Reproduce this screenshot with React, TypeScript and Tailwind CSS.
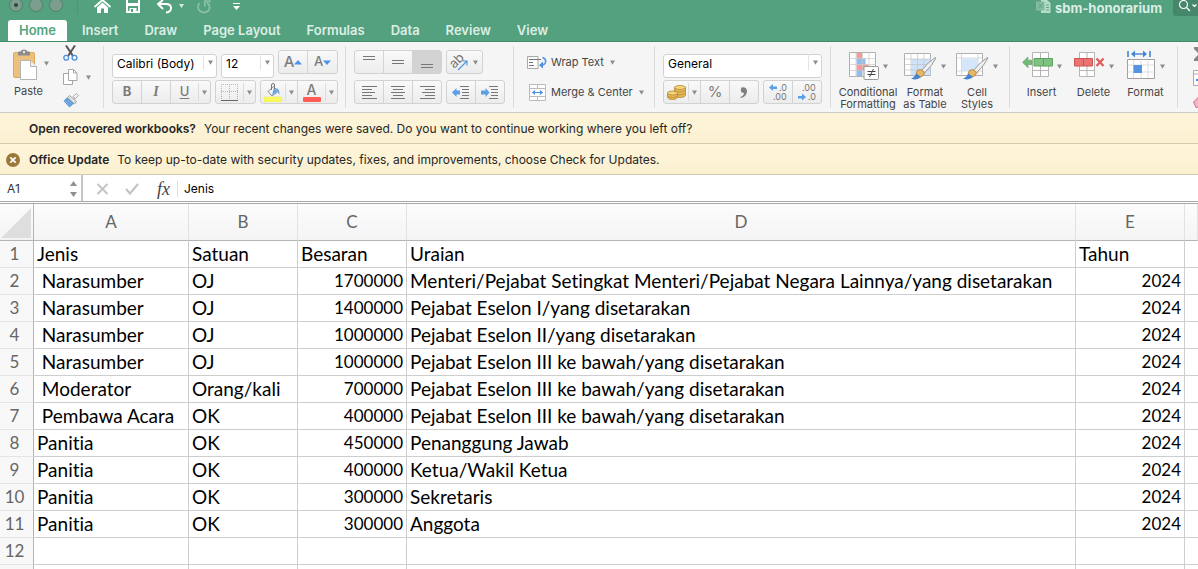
import type { ReactNode } from "react";

const UI = "font-['Inter','Liberation_Sans',sans-serif]";
const GRID = "font-['Lato','Liberation_Sans',sans-serif] [font-variant-ligatures:none]";

const tabs = ["Insert", "Draw", "Page Layout", "Formulas", "Data", "Review", "View"];

type Row = [string, string, string, string, string];

const rows: Row[] = [
  ["Jenis", "Satuan", "Besaran", "Uraian", "Tahun"],
  [" Narasumber", "OJ", "1700000", "Menteri/Pejabat Setingkat Menteri/Pejabat Negara Lainnya/yang disetarakan", "2024"],
  [" Narasumber", "OJ", "1400000", "Pejabat Eselon I/yang disetarakan", "2024"],
  [" Narasumber", "OJ", "1000000", "Pejabat Eselon II/yang disetarakan", "2024"],
  [" Narasumber", "OJ", "1000000", "Pejabat Eselon III ke bawah/yang disetarakan", "2024"],
  [" Moderator", "Orang/kali", "700000", "Pejabat Eselon III ke bawah/yang disetarakan", "2024"],
  [" Pembawa Acara", "OK", "400000", "Pejabat Eselon III ke bawah/yang disetarakan", "2024"],
  ["Panitia", "OK", "450000", "Penanggung Jawab", "2024"],
  ["Panitia", "OK", "400000", "Ketua/Wakil Ketua", "2024"],
  ["Panitia", "OK", "300000", "Sekretaris", "2024"],
  ["Panitia", "OK", "300000", "Anggota", "2024"],
  ["", "", "", "", ""],
];

function Caret() {
  return (
    <svg width="5" height="5" viewBox="0 0 5 5" className="shrink-0 fill-[#8c8c8c]" aria-hidden="true">
      <path d="M0 0.5h5L2.5 4.8z" />
    </svg>
  );
}

function Segments({ children }: { children: ReactNode }) {
  return (
    <div className="flex h-6 shrink-0 divide-x divide-[#d4d4d4] overflow-hidden rounded-[3px] border border-[#d2d2d2] bg-linear-to-b from-[#f9f9f9] to-[#ececec]">
      {children}
    </div>
  );
}

function Segment({ label, width, pressed, children }: { label: string; width: string; pressed?: boolean; children: ReactNode }) {
  return (
    <button
      type="button"
      aria-label={label}
      aria-pressed={pressed}
      className={`flex items-center justify-center text-[#7b7b7b] ${width} ${pressed ? "bg-[#d3d3d3]" : ""}`}
    >
      {children}
    </button>
  );
}

function DropSegment({ label, width, children }: { label: string; width: string; children: ReactNode }) {
  return (
    <div className={`flex ${width}`}>
      <button type="button" aria-label={label} className="flex flex-1 items-center justify-center text-[#7b7b7b]">
        {children}
      </button>
      <button type="button" aria-label={`${label} options`} className="my-0.5 flex w-3 items-center justify-center border-l border-[#dcdcdc]">
        <Caret />
      </button>
    </div>
  );
}

function Picker({ label, value, width }: { label: string; value: string; width: string }) {
  return (
    <div className={`relative h-6 shrink-0 ${width}`}>
      <select aria-label={label} className="h-6 w-full appearance-none rounded-[3px] border border-[#d2d2d2] bg-white pb-1 pl-1 text-xs text-black">
        <option>{value}</option>
      </select>
      <span className="pointer-events-none absolute top-1 right-1 bottom-1 flex items-center border-l border-[#e2e2e2] pl-1">
        <Caret />
      </span>
    </div>
  );
}

function Divider() {
  return <div className="my-1 w-px shrink-0 bg-[#dcdcdc]" />;
}

function Lines({ spans }: { spans: [number, number, number][] }) {
  return (
    <svg width="17" height="16" viewBox="0 0 17 16" stroke="#777" strokeWidth="1" aria-hidden="true">
      {spans.map(([x, y, w]) => (
        <path key={y} d={`M${x} ${y + 0.5}h${w}`} />
      ))}
    </svg>
  );
}

function PasteIcon() {
  return (
    <svg width="24" height="31" viewBox="0 0 24 31" aria-hidden="true">
      <rect x="0.5" y="3.5" width="21" height="25" rx="1.5" fill="#ecc17e" stroke="#dca95c" />
      <path d="M5 6.5V3.5q0-1 1-1h1.500Q8 .5 11 .5t3.500 2H16q1 0 1 1v3z" fill="#8b8b8b" />
      <circle cx="11" cy="3" r="1.200" fill="#e8e8e8" />
      <path d="M7.500 11.500h10l6 6v13h-16z" fill="#fff" stroke="#b4b4b4" />
      <path d="M17.500 11.500v6h6" fill="#f1f1f1" stroke="#b4b4b4" />
    </svg>
  );
}

function CutIcon() {
  return (
    <svg width="15" height="16" viewBox="0 0 15 16" fill="none" aria-hidden="true">
      <path d="M3 .5 10 11M12 .5 5 11" stroke="#555" strokeWidth="2" />
      <circle cx="3.200" cy="12.800" r="2.400" stroke="#4c90e0" strokeWidth="1.300" />
      <circle cx="11.500" cy="12.800" r="2.400" stroke="#4c90e0" strokeWidth="1.300" />
    </svg>
  );
}

function CopyIcon() {
  return (
    <svg width="15" height="16" viewBox="0 0 15 16" fill="#fff" stroke="#a6a6a6" aria-hidden="true">
      <path d="M.5 4.500h6l3 3v8h-9z" />
      <path d="M5.500.5h5l3.500 3.500v7.500H5.500z" />
      <path d="M10.500.5V4H14" fill="none" />
    </svg>
  );
}

function PainterIcon() {
  return (
    <svg width="16" height="15" viewBox="0 0 16 15" aria-hidden="true">
      <path d="M10 3.500 13.500.5l2 2-3.500 3.500z" fill="#f2f2f2" stroke="#999" strokeWidth=".8" />
      <path d="m4.500 4.500 2-2 7 6-2 2.500z" fill="#e3e3e3" stroke="#8d8d8d" strokeWidth=".8" />
      <path d="M4 4.500.5 8 6.500 14.500 11 10.500z" fill="#5b97d6" />
      <path d="m2 8 5.500 5M4 6.500l5 5" stroke="#a9caee" strokeWidth=".8" />
    </svg>
  );
}

function BordersIcon() {
  return (
    <svg width="17" height="17" viewBox="0 0 17 17" fill="none" stroke="#b4b4b4" aria-hidden="true">
      <path d="M.5 0v15M8.500 0v15M16.500 0v15M0 .5h17M0 7.500h17" strokeDasharray="1 1" />
      <path d="M0 16.500h17" stroke="#666" />
    </svg>
  );
}

function FillIcon() {
  return (
    <svg width="18" height="19" viewBox="0 0 18 19" aria-hidden="true">
      <path d="M4 8.500 9.500 3.500l4.500 5-6 4.500z" fill="#eef5fd" stroke="#808080" strokeWidth=".9" />
      <path d="m8 12.500 5.500-4L10 4.500z" fill="#6aa4e6" />
      <path d="M7.500 7V2q0-1.500 1.500-1.500T10.500 2v4" fill="none" stroke="#777" />
      <path d="M12 5q4 1 3.500 7-1.500-2-1.500-4z" fill="#5b99e0" />
      <rect y="14" width="18" height="5" rx=".5" fill="#f9f95c" stroke="#eaea52" strokeWidth=".5" />
    </svg>
  );
}

function FontColor() {
  return (
    <span className="flex flex-col items-center text-sm leading-[14px] font-medium">
      A
      <span className="h-[5px] w-[18px] rounded-[1px] bg-[#ff5b57]" />
    </span>
  );
}

function OrientationIcon() {
  return (
    <svg width="18" height="18" viewBox="0 0 18 18" aria-hidden="true" className="overflow-visible">
      <text x="-1" y="12" transform="rotate(-45 6 9)" fontSize="13" fill="#777" className="font-['Inter',sans-serif]">ab</text>
      <path d="m7 17 8.500-8.500M11.500 8h4.500v4.500" fill="none" stroke="#4c90e0" strokeWidth="1.100" />
    </svg>
  );
}

function IndentIcon({ flip }: { flip?: boolean }) {
  return (
    <svg width="18" height="13" viewBox="0 0 18 13" aria-hidden="true">
      <path d={flip ? "M8.500 6.500 4.500 2v2.500H0v4h4.500V11z" : "M0 6.500 4.500 2v2.500h3.500v4H4.500V11z"} fill="#5a9fe8" />
      <path d="M8 .5h9M10 3.500h7M10 6.500h7M10 9.500h7M8 12.500h9" stroke="#777" />
    </svg>
  );
}

function WrapIcon() {
  return (
    <svg width="20" height="15" viewBox="0 0 20 15" fill="none" aria-hidden="true">
      <path d="M.5 1.500h10.500v12H.5z" fill="#fbfbfb" stroke="#aaa" />
      <path d="M2 4.500h12M2 7.500h4M2 10.500h5" stroke="#777" />
      <path d="M15.500 2.500q4 1.500 3 5-.8 2-3 2.500" stroke="#4c90e0" strokeWidth="1.500" />
      <path d="M12 10.200 16 6.500v7z" fill="#4c90e0" />
    </svg>
  );
}

function MergeIcon() {
  return (
    <svg width="17" height="17" viewBox="0 0 17 17" fill="none" aria-hidden="true">
      <path d="M.5.5h16v16H.5zM.5 4.500h16M.5 12.500h16M8.500.5v4M8.500 12.500v4" fill="#fdfdfd" stroke="#bbb" />
      <path d="M3.500 8.500h10" stroke="#4c90e0" />
      <path d="m3 8.500 3-2.500v5zM14 8.500 11 6v5z" fill="#4c90e0" />
    </svg>
  );
}

function CoinsIcon() {
  return (
    <svg width="19" height="15" viewBox="0 0 19 15" fill="#e9ba55" stroke="#b08838" strokeWidth=".8" aria-hidden="true">
      <path d="M7.500 2.500v8q1 2 5.500 2t5.500-2v-8z" />
      <path d="M7.500 5q1 2 5.500 2t5.500-2M7.500 7.800q1 2 5.500 2t5.500-2" fill="none" />
      <ellipse cx="13" cy="2.500" rx="5.500" ry="2" fill="#f6d47c" />
      <path d="M.5 8v4.500q1 2 5 2t5-2V8z" />
      <path d="M.5 10.500q1 2 5 2t5-2" fill="none" />
      <ellipse cx="5.500" cy="8" rx="5" ry="2" fill="#f6d47c" />
    </svg>
  );
}

function DecimalIcon({ less }: { less?: boolean }) {
  return (
    <svg width="20" height="20" viewBox="0 0 20 20" className="overflow-visible fill-[#777] font-['Inter',sans-serif]" fontSize="9" aria-hidden="true">
      {less ? (
        <>
          <text x="5" y="9">.00</text>
          <text x="11" y="18">.0</text>
          <path d="M9 15 5 11.500V14H1v2.500h4V18.500z" fill="#5a9fe8" />
        </>
      ) : (
        <>
          <text x="11" y="9">.0</text>
          <text x="5" y="18">.00</text>
          <path d="M1 5.500 5 2V4.500h4v2.500H5v2z" fill="#5a9fe8" />
        </>
      )}
    </svg>
  );
}

function Brush() {
  return (
    <g>
      <path d="M31.500 5.500Q24 10 17.500 18.500l3 2.500Q28.500 13 32 6z" fill="#f0f0f0" stroke="#8e8e8e" strokeWidth=".9" />
      <path d="M16.500 17.500q-4 0-4.500 4l4.500 3.500q4-1 4-5z" fill="#e7b766" stroke="#a97f3c" strokeWidth=".8" />
      <path d="M12 21.500q-1 3.500-5 5 6 2.500 10-1.500z" fill="#4583d4" />
    </g>
  );
}

function ConditionalIcon() {
  return (
    <svg width="30" height="28" viewBox="0 0 30 28" aria-hidden="true">
      <path d="M.5.500h26v24H.5z" fill="#fff" stroke="#b0b0b0" />
      <path d="M7.500 1h5.500v5.500H7.500zM7.500 12.500h12V18h-12z" fill="#f79b98" />
      <path d="M7.500 6.500h9v6h-9zM7.500 18h5.500v6H7.500z" fill="#8fbdf1" />
      <path d="M7 .5v24M13.500.5v24M20 .5v24M.5 6.500h26M.5 12.500h26M.5 18.500h26" stroke="#c9c9c9" strokeWidth=".7" />
      <rect x="15" y="14.500" width="14.500" height="13" rx="1" fill="#fff" stroke="#999" />
      <path d="M18.500 19.500h8M18.500 22.500h8M24.500 17l-4 8" stroke="#444" />
    </svg>
  );
}

function TableStyleIcon() {
  return (
    <svg width="33" height="28" viewBox="0 0 33 28" aria-hidden="true">
      <path d="M.5 1.500h26v22H.5z" fill="#fff" stroke="#b0b0b0" />
      <path d="M7.500 7h19v16h-19z" fill="#cfe2f8" />
      <path d="M7 1.500v22M13.500 1.500v22M20 1.500v22M.5 7h26M.5 12.500h26M.5 18h26" stroke="#c3c3c3" strokeWidth=".7" />
      <Brush />
    </svg>
  );
}

function CellStyleIcon() {
  return (
    <svg width="33" height="28" viewBox="0 0 33 28" aria-hidden="true">
      <path d="M.5 1.500h26v22H.5z" fill="#fff" stroke="#b0b0b0" />
      <path d="M5.500 1.500v22M22 1.500v22M.5 6h26M.5 19h26" stroke="#c9c9c9" strokeWidth=".7" />
      <path d="M6 6.500h16V19H6z" fill="#d5e6fa" />
      <Brush />
    </svg>
  );
}

function InsertIcon() {
  return (
    <svg width="31" height="26" viewBox="0 0 31 26" aria-hidden="true">
      <path d="M10.500.5h16v24h-16zM18.500.5v24M10.500 18.500h16" fill="#fff" stroke="#b5b5b5" />
      <path d="M12 6.500h18.500V14H12z" fill="#7fc282" stroke="#5aa45e" />
      <path d="M21.500 6.500V14" stroke="#5aa45e" />
      <path d="M.5 10.200 6 5v3.200h4v4.300H6v3.200z" fill="#74b977" stroke="#5aa45e" strokeWidth=".6" />
    </svg>
  );
}

function DeleteIcon() {
  return (
    <svg width="31" height="26" viewBox="0 0 31 26" aria-hidden="true">
      <path d="M5.500.5h15v24h-15zM13 .5v24M5.500 18.500h15" fill="#fff" stroke="#b5b5b5" />
      <path d="M.5 6.500h18V14H.5z" fill="#ea7472" stroke="#cc5553" />
      <path d="M9.500 6.500V14" stroke="#cc5553" />
      <path d="m22.500 6.500 7 7.500m0-7.500-7 7.500" stroke="#dc5f5d" strokeWidth="2.400" />
    </svg>
  );
}

function FormatIcon() {
  return (
    <svg width="29" height="28" viewBox="0 0 29 28" aria-hidden="true" className="overflow-visible">
      <path d="M1 -1v6M23 -1v6" stroke="#4584d0" strokeWidth="1.600" />
      <path d="M7 2h10" stroke="#4584d0" strokeWidth="1.400" />
      <path d="m4 2 4-3.500v7zM20 2l-4-3.500v7z" fill="#4584d0" />
      <path d="M.5 7.500h27v19H.5z" fill="#fff" stroke="#a0a0a0" />
      <path d="M6.500 7.500V26M14 7.500V26M21 7.500V26M.5 13h27M.5 20h27" stroke="#d0d0d0" strokeWidth=".7" />
      <path d="M6.500 13H15v8H6.500z" fill="#5594de" />
    </svg>
  );
}

function BigButton({ icon, lines, width }: { icon: ReactNode; lines: string[]; width: string }) {
  return (
    <button type="button" className={`flex shrink-0 flex-col items-center text-[11px] leading-3 text-[#454545] ${width}`}>
      <span className="flex h-[34px] items-start gap-1">
        {icon}
        <span className="pt-3">
          <Caret />
        </span>
      </span>
      {lines.map((line) => (
        <span key={line} className="whitespace-nowrap">
          {line}
        </span>
      ))}
    </button>
  );
}

function TitleBar() {
  return (
    <div className="flex h-5 items-start">
      <svg width="240" height="16" viewBox="0 0 240 16" fill="none" aria-hidden="true" className="shrink-0">
        <g fill="#7d9e8e" stroke="#54806b">
          <circle cx="16" cy="5" r="6.500" />
          <circle cx="36" cy="5" r="6.500" />
          <circle cx="56" cy="5" r="6.500" />
        </g>
        <circle cx="16" cy="5" r="2" fill="#2e4b3d" />
        <path d="M77.500 0v14" stroke="#4a9673" />
        <path d="M94.500 7 102.500 0l8 7" stroke="#fff" strokeWidth="1.800" />
        <path d="M97 7.500 102.500 2.500 108 7.500V13h-4V8.500h-3V13h-4z" fill="#fff" />
        <path d="M127 0v12h12V0" stroke="#fff" strokeWidth="2" />
        <path d="M127 3h12v3h-12zM129.500 8h7v5h-7z" fill="#fff" />
        <path d="M131 9h2v3h-2z" fill="#53a17e" />
        <path d="m163 0-5 4 5 5M158.500 4h7.500q5 0 5 4t-5 4.500" stroke="#fff" strokeWidth="2" />
        <path d="M179 4h5l-2.500 4z" fill="#d5ebe0" />
        <path d="M199.500 3Q196.500 7.500 199.500 10.500q4.500 4 9 0 3-4-1.500-8M204.800 6.500V1.200h6" stroke="#86bfa3" strokeWidth="1.900" />
        <path d="M233 3.500h7" stroke="#fff" />
        <path d="M233 6h7l-3.500 4z" fill="#fff" />
      </svg>
      <div className="ml-auto flex items-start">
        <svg width="15" height="13" viewBox="0 0 15 13" aria-hidden="true">
          <path d="M5 0h6l3.500 3v10H5z" fill="#b9dcca" />
          <path d="M0 1.500h8.500v9H0z" fill="#82bb9e" />
          <path d="m2.500 3.500 4 4.500m0-4.500-4 4.500M10 5h3M10 7.500h3M10 10h3" stroke="#5fa583" />
        </svg>
        <h1 className="ml-1 text-[13px] leading-4 font-bold text-[#dceee5]">sbm-honorarium</h1>
        <button type="button" aria-label="Search" className="ml-[11px] h-4 rounded-bl-[3px] bg-[#46866a]">
          <svg width="25" height="16" viewBox="0 0 25 16" fill="none" stroke="#fff" aria-hidden="true">
            <circle cx="10.500" cy="4.500" r="4" strokeWidth="1.200" />
            <path d="m13.500 7.500 3.500 3.500" strokeWidth="1.300" />
            <path d="m19.500 4.500 2 2 2-2" strokeWidth="1.200" />
          </svg>
        </button>
      </div>
    </div>
  );
}

function Ribbon() {
  return (
    <div className="flex h-[71px] overflow-hidden border-b border-[#c9c9c9] bg-[#f5f5f5]" role="toolbar" aria-label="Home">
      <div className="flex w-[103px] shrink-0 pt-[7px] pl-[11px]">
        <button type="button" className="flex w-[35px] flex-col items-center justify-start gap-[5px] text-[11px] leading-3 text-[#454545]">
          <span className="mr-2"><PasteIcon /></span>
          <span>Paste</span>
        </button>
        <span className="-ml-0.5 pt-3">
          <Caret />
        </span>
        <div className="-mt-1 ml-3.5 flex flex-col gap-2">
          <button type="button" aria-label="Cut">
            <CutIcon />
          </button>
          <button type="button" aria-label="Copy" className="flex items-center gap-2">
            <CopyIcon />
            <Caret />
          </button>
          <button type="button" aria-label="Format Painter">
            <PainterIcon />
          </button>
        </div>
      </div>
      <Divider />
      <div className="flex shrink-0 flex-col gap-1.5 pt-2 pr-[7px] pl-2">
        <div className="flex gap-1">
          <Picker label="Font" value="Calibri (Body)" width="w-[105px]" />
          <Picker label="Font size" value="12" width="w-[53px]" />
          <Segments>
            <Segment label="Increase font size" width="w-[29px]">
              <span className="text-[15px] font-medium">A</span>
              <svg width="8" height="5" viewBox="0 0 8 5" aria-hidden="true" className="fill-[#4c95e6]"><path d="M0 4.500 4 0l4 4.500z" /></svg>
            </Segment>
            <Segment label="Decrease font size" width="w-[29px]">
              <span className="text-[13px] font-medium">A</span>
              <svg width="8" height="5" viewBox="0 0 8 5" aria-hidden="true" className="fill-[#4c95e6]"><path d="M0 .5 4 5l4-4.500z" /></svg>
            </Segment>
          </Segments>
        </div>
        <div className="flex gap-1">
          <Segments>
            <Segment label="Bold" width="w-[29px]"><span className="text-[13px] font-bold">B</span></Segment>
            <Segment label="Italic" width="w-[29px]"><span className="font-['Liberation_Serif',serif] text-sm font-bold italic">I</span></Segment>
            <DropSegment label="Underline" width="w-[39px]"><span className="text-[13px] font-medium underline underline-offset-2">U</span></DropSegment>
          </Segments>
          <Segments>
            <DropSegment label="Borders" width="w-[39px]"><BordersIcon /></DropSegment>
          </Segments>
          <Segments>
            <DropSegment label="Fill Color" width="w-[37px]"><FillIcon /></DropSegment>
            <DropSegment label="Font Color" width="w-[39px]"><FontColor /></DropSegment>
          </Segments>
        </div>
      </div>
      <Divider />
      <div className="flex shrink-0 flex-col gap-1.5 px-2 pt-2">
        <div className="flex gap-1">
          <Segments>
            <Segment label="Top Align" width="w-[29px]"><Lines spans={[[2, 2, 12], [2, 5, 12]]} /></Segment>
            <Segment label="Middle Align" width="w-[29px]"><Lines spans={[[2, 6, 12], [2, 9, 12]]} /></Segment>
            <Segment label="Bottom Align" width="w-[28px]" pressed><Lines spans={[[2, 10, 12], [2, 13, 12]]} /></Segment>
          </Segments>
          <Segments>
            <Segment label="Orientation" width="w-[35px]">
              <span className="flex items-center gap-1"><OrientationIcon /><Caret /></span>
            </Segment>
          </Segments>
        </div>
        <div className="flex gap-1">
          <Segments>
            <Segment label="Align Left" width="w-[29px]"><Lines spans={[[1, 2, 15], [1, 5, 10], [1, 8, 13], [1, 11, 10], [1, 14, 15]]} /></Segment>
            <Segment label="Center" width="w-[29px]"><Lines spans={[[1, 2, 14], [3, 5, 10], [1, 8, 14], [3, 11, 10], [1, 14, 14]]} /></Segment>
            <Segment label="Align Right" width="w-[28px]"><Lines spans={[[1, 2, 15], [6, 5, 10], [3, 8, 13], [6, 11, 10], [1, 14, 15]]} /></Segment>
          </Segments>
          <Segments>
            <Segment label="Decrease Indent" width="w-[29px]"><IndentIcon /></Segment>
            <Segment label="Increase Indent" width="w-[28px]"><IndentIcon flip /></Segment>
          </Segments>
        </div>
      </div>
      <Divider />
      <div className="flex w-[140px] shrink-0 flex-col gap-1.5 pt-2 pl-[13px] text-[11px] text-[#454545]">
        <button type="button" className="flex h-6 items-center gap-1 whitespace-nowrap">
          <WrapIcon />
          Wrap Text
          <span className="ml-0.5"><Caret /></span>
        </button>
        <button type="button" className="flex h-6 items-center gap-1 whitespace-nowrap">
          <span className="flex w-5 justify-center"><MergeIcon /></span>
          Merge &amp; Center
          <span className="ml-0.5"><Caret /></span>
        </button>
      </div>
      <Divider />
      <div className="flex shrink-0 flex-col gap-1.5 px-2 pt-2">
        <Picker label="Number format" value="General" width="w-[159px]" />
        <div className="flex gap-1">
          <Segments>
            <DropSegment label="Accounting format" width="w-[37px]"><CoinsIcon /></DropSegment>
            <Segment label="Percent style" width="w-[29px]"><span className="text-[15px]">%</span></Segment>
            <Segment label="Comma style" width="w-[28px]">
              <svg width="8" height="11" viewBox="0 0 8 11" aria-hidden="true"><path d="M2 .3Q7.500 0 7 5 6 10 .8 11l-.3-1Q4 8.500 4 6 .8 6 .8 3 .8.8 2 .3z" fill="#808080" /></svg>
            </Segment>
          </Segments>
          <Segments>
            <Segment label="Increase decimal" width="w-[29px]"><DecimalIcon /></Segment>
            <Segment label="Decrease decimal" width="w-[28px]"><DecimalIcon less /></Segment>
          </Segments>
        </div>
      </div>
      <Divider />
      <div className="flex w-[178px] shrink-0 items-start gap-1 pt-[10px] pl-2">
        <BigButton icon={<ConditionalIcon />} lines={["Conditional", "Formatting"]} width="w-[58px]" />
        <BigButton icon={<TableStyleIcon />} lines={["Format", "as Table"]} width="w-[48px]" />
        <BigButton icon={<CellStyleIcon />} lines={["Cell", "Styles"]} width="w-[48px]" />
      </div>
      <Divider />
      <div className="flex w-[167px] shrink-0 items-start justify-center gap-1 pt-[10px]">
        <BigButton icon={<InsertIcon />} lines={["Insert"]} width="w-[48px]" />
        <BigButton icon={<DeleteIcon />} lines={["Delete"]} width="w-[48px]" />
        <BigButton icon={<FormatIcon />} lines={["Format"]} width="w-[48px]" />
      </div>
      <Divider />
      <div className="flex shrink-0 flex-col gap-2 pt-1 pl-[15px]">
        <button type="button" aria-label="AutoSum">
          <svg width="15" height="16" viewBox="0 0 15 16" aria-hidden="true"><path d="M1 1h12v3H6l4 4-4 4h7v3H1v-2l5-5-5-5z" fill="#858585" /></svg>
        </button>
        <button type="button" aria-label="Fill">
          <svg width="15" height="16" viewBox="0 0 15 16" aria-hidden="true"><path d="M.5.5h14v15H.5zM.5 4h14" fill="#fff" stroke="#aaa" /><path d="M3 9h5V6l5 4-5 4v-3H3z" fill="#4c90e0" /></svg>
        </button>
        <button type="button" aria-label="Clear">
          <svg width="15" height="14" viewBox="0 0 15 14" aria-hidden="true"><path d="M.5 8 8 .5l6.500 5L7 13.500H3z" fill="#f4b3c5" stroke="#d3758f" /></svg>
        </button>
      </div>
    </div>
  );
}

function Notice({ title, children, dismiss }: { title: string; children: ReactNode; dismiss?: boolean }) {
  return (
    <div className="flex h-[31px] items-center border-b border-[#d2cbb0] bg-linear-to-b from-[#fef5da] to-[#fbf0d0] pt-0.5 text-xs text-[#262626]">
      <span className="flex w-[29px] shrink-0 pl-1.5">
        {dismiss && (
          <button type="button" aria-label="Dismiss">
            <svg width="14" height="14" viewBox="0 0 14 14" aria-hidden="true">
              <circle cx="7" cy="7" r="7" fill="#9c7838" />
              <path d="m4.300 4.300 5.400 5.400m0-5.400L4.300 9.700" stroke="#fff" strokeWidth="1.700" />
            </svg>
          </button>
        )}
      </span>
      <strong className="mr-2 font-semibold">{title}</strong>
      <span>{children}</span>
    </div>
  );
}

function FormulaBar() {
  return (
    <div className="flex h-[27px] items-stretch border-b border-[#a8a8a8] bg-white text-xs">
      <div className="flex w-[83px] shrink-0 items-center justify-between border-r-2 border-[#c6c6c6] pt-0.5 pr-1 pl-[7px]">
        <input aria-label="Name box" defaultValue="A1" className="w-12 bg-transparent text-[#333] outline-none" />
        <svg width="7" height="18" viewBox="0 0 7 18" className="fill-[#909090]" aria-hidden="true">
          <path d="M0 6 3.500 1 7 6zM0 12h7l-3.500 5z" />
        </svg>
      </div>
      <div className="flex w-[94px] shrink-0 items-center pt-0.5 pl-[13px]">
        <button type="button" aria-label="Cancel">
          <svg width="13" height="12" viewBox="0 0 13 12" aria-hidden="true"><path d="m1.500 1 10 10m0-10-10 10" stroke="#c4c4c4" strokeWidth="2" /></svg>
        </button>
        <button type="button" aria-label="Enter" className="ml-4">
          <svg width="14" height="12" viewBox="0 0 14 12" aria-hidden="true"><path d="m1 6 4 4.500L13 1" fill="none" stroke="#c4c4c4" strokeWidth="2.200" /></svg>
        </button>
        <button type="button" aria-label="Insert function" className="ml-[18px] font-['Liberation_Serif',serif] text-lg leading-4 text-[#444] italic">
          fx
        </button>
      </div>
      <input aria-label="Formula" defaultValue="Jenis" className="mt-1.5 mb-1 min-w-0 flex-1 border-l border-[#ddd] pl-1.5 text-black outline-none" />
    </div>
  );
}

function Sheet() {
  return (
    <div className={`mt-px overflow-hidden border-t border-[#a8a8a8] ${GRID}`}>
      <table className="w-full min-w-[1190px] table-fixed border-separate border-spacing-0 text-[19px] leading-[26px] text-black">
        <colgroup>
          <col className="w-[34px]" />
          <col className="w-[155px]" />
          <col className="w-[109px]" />
          <col className="w-[109px]" />
          <col className="w-[669px]" />
          <col className="w-[109px]" />
          <col />
        </colgroup>
        <thead>
          <tr className="h-[37px] bg-linear-to-b from-[#fcfcfc] to-[#f4f4f4] text-[17px] text-[#666]">
            <th aria-label="Select all" className="border-r border-b border-[#b5b5b5] p-0">
              <svg width="31" height="31" viewBox="0 0 31 31" className="fill-[#dedede]" aria-hidden="true"><path d="M31 1v30H1z" /></svg>
            </th>
            {["A", "B", "C", "D", "E", ""].map((name, i) => (
              <th key={i} className="border-r border-b border-r-[#e2e2e2] border-b-[#b5b5b5] p-0 font-normal">
                {name}
              </th>
            ))}
          </tr>
        </thead>
        <tbody>
          {rows.map((row, r) => (
            <tr key={r} className="h-[27px]">
              <th className="border-r border-b border-r-[#b5b5b5] border-b-[#e4e4e4] bg-[#f8f8f8] p-0 pr-1 text-[17px] font-normal text-[#666]">{r + 1}</th>
              {row.map((value, c) => (
                <td
                  key={c}
                  className={`overflow-hidden border-r border-b border-[#cecece] px-[3px] py-0 whitespace-pre ${r > 0 && (c === 2 || c === 4) ? "text-right text-[17px]" : ""}`}
                >
                  {value}
                </td>
              ))}
              <td className="border-b border-[#cecece] p-0" />
            </tr>
          ))}
          <tr className="h-[27px]">
            <th className="border-r border-[#b5b5b5] bg-[#f8f8f8] p-0" />
            {[0, 1, 2, 3, 4].map((c) => (
              <td key={c} className="border-r border-[#cecece] p-0" />
            ))}
            <td className="p-0" />
          </tr>
        </tbody>
      </table>
    </div>
  );
}

export default function App() {
  return (
    <div className={`h-screen overflow-hidden bg-white ${UI}`}>
      <header className="border-b border-[#3f8c68] bg-[#53a17e]">
        <TitleBar />
        <nav className="flex h-[21px] pl-2 text-[13px] font-semibold text-[#dceee5]">
          <a href="#home" className="rounded-t-[3px] bg-white px-[11px] leading-[21px] text-[#54a680]">
            Home
          </a>
          <div className="ml-[15px] flex gap-[26px] leading-[21px]">
            {tabs.map((tab) => (
              <a key={tab} href={`#${tab.toLowerCase().replace(" ", "-")}`}>
                {tab}
              </a>
            ))}
          </div>
        </nav>
      </header>
      <Ribbon />
      <Notice title="Open recovered workbooks?">Your recent changes were saved. Do you want to continue working where you left off?</Notice>
      <Notice title="Office Update" dismiss>
        To keep up-to-date with security updates, fixes, and improvements, choose Check for Updates.
      </Notice>
      <FormulaBar />
      <Sheet />
    </div>
  );
}
